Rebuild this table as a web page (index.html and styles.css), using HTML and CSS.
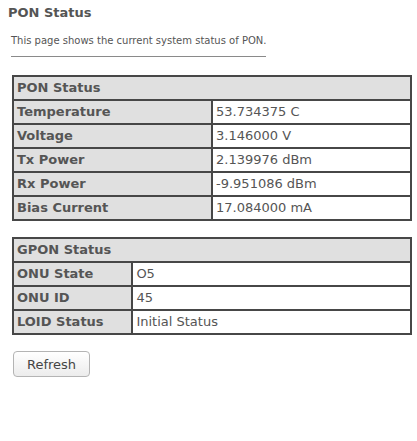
FILE: index.html
```html
<!DOCTYPE html>
<html>
<head>
<meta charset="utf-8">
<link rel="stylesheet" href="styles.css">
</head>
<body>
<div class="page">
  <h1 class="title">PON Status</h1>
  <div class="intro">
    <p class="desc">This page shows the current system status of PON.</p>
    <hr class="rule">
  </div>
  <table class="status">
    <tr><td class="head" colspan="2">PON Status</td></tr>
    <tr><td class="label half">Temperature</td><td class="value">53.734375 C</td></tr>
    <tr><td class="label">Voltage</td><td class="value">3.146000 V</td></tr>
    <tr><td class="label">Tx Power</td><td class="value">2.139976 dBm</td></tr>
    <tr><td class="label">Rx Power</td><td class="value">-9.951086 dBm</td></tr>
    <tr><td class="label">Bias Current</td><td class="value">17.084000 mA</td></tr>
  </table>
  <table class="status">
    <tr><td class="head" colspan="2">GPON Status</td></tr>
    <tr><td class="label narrow">ONU State</td><td class="value">O5</td></tr>
    <tr><td class="label">ONU ID</td><td class="value">45</td></tr>
    <tr><td class="label">LOID Status</td><td class="value">Initial Status</td></tr>
  </table>
  <div class="actions">
    <button class="btn" type="button">Refresh</button>
  </div>
</div>
</body>
</html>
```

FILE: styles.css
```css
html, body {
  margin: 0;
  padding: 0;
  background: #ffffff;
}
body {
  font-family: "DejaVu Sans", Verdana, sans-serif;
  color: #555555;
}
.page {
  padding: 5px 0 0 8px;
}
.title {
  margin: 0;
  font-size: 13px;
  line-height: 15px;
  font-weight: bold;
  color: #555555;
}
.intro {
  display: inline-block;
  margin: 15px 0 0 3px;
}
.desc {
  margin: 0;
  font-size: 10px;
  line-height: 12px;
  color: #555555;
}
.rule {
  margin: 9px 0 0 0;
  border: 0;
  border-top: 1px solid #8a8a8a;
  height: 0;
}
.status {
  display: table;
  margin: 14px 0 0 4px;
  width: 400px;
  border-collapse: collapse;
  border: 2px solid #474747;
  font-size: 13px;
}
.status + .status {
  margin-top: 16px;
}
.status td {
  border: 2px solid #474747;
  padding: 3px 3px;
  line-height: 16px;
  white-space: nowrap;
}
.head {
  background: #e0e0e0;
  font-weight: bold;
}
.label {
  background: #e0e0e0;
  font-weight: bold;
}
.half {
  width: 50%;
}
.narrow {
  width: 30%;
}
.value {
  background: #ffffff;
}
.actions {
  margin: 16px 0 0 5px;
}
.btn {
  font-family: "DejaVu Sans", Verdana, sans-serif;
  font-size: 13px;
  color: #444444;
  width: 77px;
  height: 26px;
  padding: 0;
  border: 1px solid #b4b4b4;
  border-radius: 4px;
  background: linear-gradient(#ffffff, #ececec);
}
```
